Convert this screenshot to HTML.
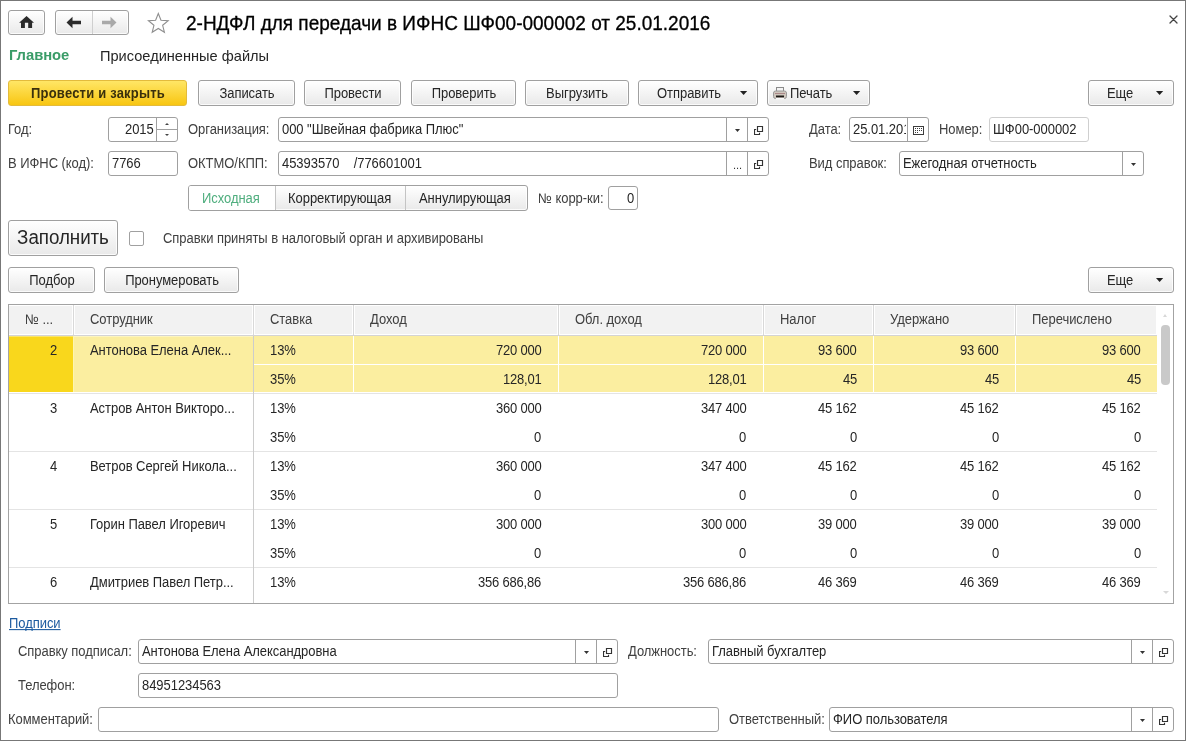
<!DOCTYPE html>
<html><head><meta charset="utf-8"><title>2-НДФЛ</title>
<style>
html,body{margin:0;padding:0;}
body{width:1186px;height:741px;position:relative;overflow:hidden;background:#fff;font-family:"Liberation Sans",sans-serif;}
.frame{position:absolute;left:0;top:0;width:1186px;height:741px;box-sizing:border-box;border:1px solid #777;}
.t{position:absolute;white-space:nowrap;line-height:1;letter-spacing:-0.05px;transform:scaleY(1.07);transform-origin:0 84.65%;will-change:transform;}
.b{position:absolute;box-sizing:border-box;}
</style></head><body>
<div class="frame"></div>
<div class="b" style="left:8px;top:10px;width:37px;height:25px;border:1px solid #a0a0a0;border-radius:3px;background:linear-gradient(#ffffff,#e9e9e9);box-shadow:inset 0 0 0 1px rgba(255,255,255,0.8);"></div>
<svg class="b" style="left:19px;top:15px" width="16" height="14" viewBox="0 0 16 14"><path d="M7.55 0.9L15 7.8H13.1V12.9H9.2V7.8H5.9V12.9H2V7.8H0.1Z" fill="#2b2b2b"/></svg>
<div class="b" style="left:55px;top:10px;width:74px;height:25px;border:1px solid #a0a0a0;border-radius:3px;background:linear-gradient(#ffffff,#e9e9e9);box-shadow:inset 0 0 0 1px rgba(255,255,255,0.8);"></div>
<div class="b" style="left:92px;top:11px;width:1px;height:23px;background:#cfcfcf;"></div>
<svg class="b" style="left:66px;top:16px" width="16" height="13" viewBox="0 0 16 13"><path d="M0.5 6.5L6.5 0.8V4.8H15V8.2H6.5V12.2Z" fill="#2b2b2b"/></svg>
<svg class="b" style="left:101px;top:16px" width="16" height="13" viewBox="0 0 16 13"><path d="M15.5 6.5L9.5 0.8V4.8H1V8.2H9.5V12.2Z" fill="#a9a9a9"/></svg>
<svg class="b" style="left:146px;top:12px" width="26" height="24" viewBox="0 0 26 24"><path d="M12.30 1.50L14.99 8.20L22.19 8.69L16.65 13.31L18.41 20.31L12.30 16.48L6.19 20.31L7.95 13.31L2.41 8.69L9.61 8.20Z" fill="none" stroke="#8f8f8f" stroke-width="1.1" stroke-linejoin="miter"/></svg>
<div class="t" style="left:186px;top:13.92px;font-size:19px;color:#000;font-weight:400;-webkit-text-stroke:0.3px #000;letter-spacing:0;">2-НДФЛ для передачи в ИФНС ШФ00-000002 от 25.01.2016</div>
<svg class="b" style="left:1169px;top:15px" width="9" height="9" viewBox="0 0 9 9"><path d="M1 1L8 8M8 1L1 8" stroke="#444" stroke-width="1.3" stroke-linecap="round"/></svg>
<div class="t" style="left:8.5px;top:48.47px;font-size:14.8px;color:#3a9c68;font-weight:700;transform:none;">Главное</div>
<div class="t" style="left:100px;top:48.64px;font-size:14.6px;color:#262626;font-weight:400;transform:scaleY(1.04);letter-spacing:0;">Присоединенные файлы</div>
<div class="b" style="left:8px;top:80px;width:179px;height:26px;border:1px solid #e3bb3c;border-radius:3px;background:linear-gradient(#ffe666,#f8c612);"></div>
<div class="t" style="left:-102.5px;width:400px;text-align:center;top:86.68px;font-size:13px;color:#3a300c;font-weight:700;letter-spacing:0.2px;">Провести и закрыть</div>
<div class="b" style="left:198px;top:80px;width:97px;height:26px;border:1px solid #a0a0a0;border-radius:3px;background:linear-gradient(#ffffff,#e9e9e9);box-shadow:inset 0 0 0 1px rgba(255,255,255,0.8);"></div>
<div class="t" style="left:46.5px;width:400px;text-align:center;top:86.68px;font-size:13px;color:#262626;font-weight:400;">Записать</div>
<div class="b" style="left:304px;top:80px;width:97px;height:26px;border:1px solid #a0a0a0;border-radius:3px;background:linear-gradient(#ffffff,#e9e9e9);box-shadow:inset 0 0 0 1px rgba(255,255,255,0.8);"></div>
<div class="t" style="left:152.5px;width:400px;text-align:center;top:86.68px;font-size:13px;color:#262626;font-weight:400;">Провести</div>
<div class="b" style="left:411px;top:80px;width:105px;height:26px;border:1px solid #a0a0a0;border-radius:3px;background:linear-gradient(#ffffff,#e9e9e9);box-shadow:inset 0 0 0 1px rgba(255,255,255,0.8);"></div>
<div class="t" style="left:263.5px;width:400px;text-align:center;top:86.68px;font-size:13px;color:#262626;font-weight:400;">Проверить</div>
<div class="b" style="left:525px;top:80px;width:104px;height:26px;border:1px solid #a0a0a0;border-radius:3px;background:linear-gradient(#ffffff,#e9e9e9);box-shadow:inset 0 0 0 1px rgba(255,255,255,0.8);"></div>
<div class="t" style="left:377.0px;width:400px;text-align:center;top:86.68px;font-size:13px;color:#262626;font-weight:400;">Выгрузить</div>
<div class="b" style="left:638px;top:80px;width:120px;height:26px;border:1px solid #a0a0a0;border-radius:3px;background:linear-gradient(#ffffff,#e9e9e9);box-shadow:inset 0 0 0 1px rgba(255,255,255,0.8);"></div>
<div class="t" style="left:657px;top:86.68px;font-size:13px;color:#262626;font-weight:400;">Отправить</div>
<svg class="b" style="left:740px;top:91.0px" width="8" height="5" viewBox="0 0 8 5"><path d="M0 0H7.2L3.6 4Z" fill="#222"/></svg>
<div class="b" style="left:767px;top:80px;width:103px;height:26px;border:1px solid #a0a0a0;border-radius:3px;background:linear-gradient(#ffffff,#e9e9e9);box-shadow:inset 0 0 0 1px rgba(255,255,255,0.8);"></div>
<div class="t" style="left:790px;top:86.68px;font-size:13px;color:#262626;font-weight:400;">Печать</div>
<svg class="b" style="left:853px;top:91.0px" width="8" height="5" viewBox="0 0 8 5"><path d="M0 0H7.2L3.6 4Z" fill="#222"/></svg>
<svg class="b" style="left:773px;top:87px" width="14" height="13" viewBox="0 0 14 13"><rect x="3.5" y="0.5" width="7" height="5" fill="#f4f4f4" stroke="#8a8a8a"/><rect x="0.5" y="4" width="13" height="7.5" rx="2" fill="#cfc6bd" stroke="#9a9a9a"/><rect x="3" y="8.5" width="8" height="2" fill="#1e1a17"/><rect x="3" y="10.8" width="8" height="1.5" fill="#fafafa"/><rect x="2" y="6" width="10" height="1" fill="#a88"/></svg>
<div class="b" style="left:1088px;top:80px;width:86px;height:26px;border:1px solid #a0a0a0;border-radius:3px;background:linear-gradient(#ffffff,#e9e9e9);box-shadow:inset 0 0 0 1px rgba(255,255,255,0.8);"></div>
<div class="t" style="left:1107px;top:86.68px;font-size:13px;color:#262626;font-weight:400;">Еще</div>
<svg class="b" style="left:1156px;top:91.0px" width="8" height="5" viewBox="0 0 8 5"><path d="M0 0H7.2L3.6 4Z" fill="#222"/></svg>
<div class="t" style="left:8px;top:123.00px;font-size:13px;color:#404040;font-weight:400;">Год:</div>
<div class="b" style="left:108px;top:117px;width:70px;height:25px;border:1px solid #a0a0a0;border-radius:3px;background:#fff;"></div>
<div class="b" style="left:156px;top:118px;width:1px;height:23px;background:#a0a0a0;"></div>
<div class="t" style="right:1032px;top:123.10px;font-size:13px;color:#262626;font-weight:400;text-align:right;">2015</div>
<div class="b" style="left:157px;top:129px;width:20px;height:1px;background:#a0a0a0;"></div>
<div class="b" style="left:165px;top:123px;width:0;height:0;border-left:2px solid transparent;border-right:2px solid transparent;border-bottom:2px solid #444;"></div>
<div class="b" style="left:165px;top:134px;width:0;height:0;border-left:2px solid transparent;border-right:2px solid transparent;border-top:2px solid #444;"></div>
<div class="t" style="left:188px;top:123.00px;font-size:13px;color:#404040;font-weight:400;">Организация:</div>
<div class="b" style="left:278px;top:117px;width:491px;height:25px;border:1px solid #a0a0a0;border-radius:3px;background:#fff;"></div>
<svg class="b" style="left:735px;top:129px" width="5" height="3" viewBox="0 0 5 3"><path d="M0 0H5L2.5 3Z" fill="#333"/></svg>
<svg class="b" style="left:754px;top:126px" width="10" height="10" viewBox="0 0 10 10"><path d="M3.5 0.5h5v5h-5z" fill="none" stroke="#333" stroke-width="1.15"/><path d="M2.2 3.5H0.5V8.5H5.5V6.8" fill="none" stroke="#333" stroke-width="1.15"/></svg>
<div class="b" style="left:726px;top:118px;width:1px;height:23px;background:#a0a0a0;"></div>
<div class="b" style="left:747px;top:118px;width:1px;height:23px;background:#a0a0a0;"></div>
<div class="t" style="left:282px;top:123.10px;font-size:13px;color:#262626;font-weight:400;">000 "Швейная фабрика Плюс"</div>
<div class="t" style="left:809px;top:123.00px;font-size:13px;color:#404040;font-weight:400;">Дата:</div>
<div class="b" style="left:849px;top:117px;width:80px;height:25px;border:1px solid #a0a0a0;border-radius:3px;background:#fff;"></div>
<div class="b" style="left:907px;top:118px;width:1px;height:23px;background:#a0a0a0;"></div>
<div class="t" style="left:853px;top:123px;width:53px;overflow:hidden;font-size:13px;color:#262626;">25.01.2016</div>
<svg class="b" style="left:913px;top:126px" width="11" height="9" viewBox="0 0 11 9"><rect x="0.5" y="0.5" width="10" height="8" fill="#fff" stroke="#3d3d3d"/><path d="M2 2h1v1h-1zM4 2h1v1h-1zM6 2h1v1h-1zM8 2h1v1h-1zM2 4h1v1h-1zM4 4h1v1h-1zM6 4h1v1h-1zM8 4h1v1h-1zM2 6h1v1h-1zM4 6h1v1h-1z" fill="#3d3d3d"/></svg>
<div class="t" style="left:939px;top:123.00px;font-size:13px;color:#404040;font-weight:400;">Номер:</div>
<div class="b" style="left:989px;top:117px;width:100px;height:25px;border:1px solid #cfcfcf;border-radius:3px;background:#fff;"></div>
<div class="t" style="left:993px;top:123.10px;font-size:13px;color:#262626;font-weight:400;">ШФ00-000002</div>
<div class="t" style="left:8px;top:157.00px;font-size:13px;color:#404040;font-weight:400;">В ИФНС (код):</div>
<div class="b" style="left:108px;top:151px;width:70px;height:25px;border:1px solid #a0a0a0;border-radius:3px;background:#fff;"></div>
<div class="t" style="left:112px;top:157.10px;font-size:13px;color:#262626;font-weight:400;">7766</div>
<div class="t" style="left:188px;top:157.00px;font-size:13px;color:#404040;font-weight:400;">ОКТМО/КПП:</div>
<div class="b" style="left:278px;top:151px;width:491px;height:25px;border:1px solid #a0a0a0;border-radius:3px;background:#fff;"></div>
<svg class="b" style="left:754px;top:160px" width="10" height="10" viewBox="0 0 10 10"><path d="M3.5 0.5h5v5h-5z" fill="none" stroke="#333" stroke-width="1.15"/><path d="M2.2 3.5H0.5V8.5H5.5V6.8" fill="none" stroke="#333" stroke-width="1.15"/></svg>
<div class="b" style="left:726px;top:152px;width:1px;height:23px;background:#a0a0a0;"></div>
<div class="b" style="left:747px;top:152px;width:1px;height:23px;background:#a0a0a0;"></div>
<div class="t" style="left:282px;top:157.10px;font-size:13px;color:#262626;font-weight:400;">45393570&nbsp;&nbsp;&nbsp; /776601001</div>
<div class="t" style="left:733px;top:160.09px;font-size:11px;color:#333;font-weight:400;">...</div>
<div class="t" style="left:809px;top:157.00px;font-size:13px;color:#404040;font-weight:400;">Вид справок:</div>
<div class="b" style="left:899px;top:151px;width:245px;height:25px;border:1px solid #a0a0a0;border-radius:3px;background:#fff;"></div>
<svg class="b" style="left:1131px;top:163px" width="5" height="3" viewBox="0 0 5 3"><path d="M0 0H5L2.5 3Z" fill="#333"/></svg>
<div class="b" style="left:1122px;top:152px;width:1px;height:23px;background:#a0a0a0;"></div>
<div class="t" style="left:903px;top:157.10px;font-size:13px;color:#262626;font-weight:400;">Ежегодная отчетность</div>
<div class="b" style="left:188px;top:185px;width:340px;height:26px;border:1px solid #a0a0a0;border-radius:3px;background:linear-gradient(#ffffff,#e9e9e9);box-shadow:inset 0 0 0 1px rgba(255,255,255,0.8);"></div>
<div class="b" style="left:189px;top:186px;width:86px;height:24px;background:#fff;border-radius:2px 0 0 2px;"></div>
<div class="b" style="left:275px;top:186px;width:1px;height:24px;background:#c4c4c4;"></div>
<div class="b" style="left:405px;top:186px;width:1px;height:24px;background:#c4c4c4;"></div>
<div class="t" style="left:202px;top:192.00px;font-size:13px;color:#4fae7e;font-weight:400;">Исходная</div>
<div class="t" style="left:288px;top:192.00px;font-size:13px;color:#262626;font-weight:400;">Корректирующая</div>
<div class="t" style="left:419px;top:192.00px;font-size:13px;color:#262626;font-weight:400;">Аннулирующая</div>
<div class="t" style="left:538px;top:192.00px;font-size:13px;color:#404040;font-weight:400;">№ корр-ки:</div>
<div class="b" style="left:608px;top:186px;width:30px;height:24px;border:1px solid #a0a0a0;border-radius:3px;background:#fff;"></div>
<div class="t" style="right:552px;top:191.60px;font-size:13px;color:#262626;font-weight:400;text-align:right;">0</div>
<div class="b" style="left:8px;top:220px;width:110px;height:36px;border:1px solid #a0a0a0;border-radius:3px;background:linear-gradient(#ffffff,#e9e9e9);box-shadow:inset 0 0 0 1px rgba(255,255,255,0.8);"></div>
<div class="t" style="left:-137.0px;width:400px;text-align:center;top:228.85px;font-size:18.8px;color:#262626;font-weight:400;">Заполнить</div>
<div class="b" style="left:129px;top:231px;width:15px;height:15px;border:1px solid #a0a0a0;border-radius:2px;background:#fff;"></div>
<div class="t" style="left:163px;top:232.00px;font-size:13px;color:#404040;font-weight:400;">Справки приняты в налоговый орган и архивированы</div>
<div class="b" style="left:8px;top:267px;width:87px;height:26px;border:1px solid #a0a0a0;border-radius:3px;background:linear-gradient(#ffffff,#e9e9e9);box-shadow:inset 0 0 0 1px rgba(255,255,255,0.8);"></div>
<div class="t" style="left:-148.5px;width:400px;text-align:center;top:273.68px;font-size:13px;color:#262626;font-weight:400;">Подбор</div>
<div class="b" style="left:104px;top:267px;width:135px;height:26px;border:1px solid #a0a0a0;border-radius:3px;background:linear-gradient(#ffffff,#e9e9e9);box-shadow:inset 0 0 0 1px rgba(255,255,255,0.8);"></div>
<div class="t" style="left:-28.5px;width:400px;text-align:center;top:273.68px;font-size:13px;color:#262626;font-weight:400;">Пронумеровать</div>
<div class="b" style="left:1088px;top:267px;width:86px;height:26px;border:1px solid #a0a0a0;border-radius:3px;background:linear-gradient(#ffffff,#e9e9e9);box-shadow:inset 0 0 0 1px rgba(255,255,255,0.8);"></div>
<div class="t" style="left:1107px;top:273.68px;font-size:13px;color:#262626;font-weight:400;">Еще</div>
<svg class="b" style="left:1156px;top:278.0px" width="8" height="5" viewBox="0 0 8 5"><path d="M0 0H7.2L3.6 4Z" fill="#222"/></svg>
<div class="b" style="left:8px;top:304px;width:1166px;height:300px;border:1px solid #a3a3a3;background:#fff;"></div>
<div class="b" style="left:9px;top:306px;width:1147px;height:28px;background:#f2f2f2;"></div>
<div class="b" style="left:9px;top:334px;width:1148px;height:1px;background:#fff;"></div>
<div class="b" style="left:9px;top:335px;width:1148px;height:1px;background:#d4d4d4;"></div>
<div class="b" style="left:73px;top:305px;width:1px;height:30px;background:#d9d9d9;"></div>
<div class="b" style="left:72px;top:305px;width:1px;height:29px;background:#fff;"></div>
<div class="b" style="left:74px;top:305px;width:1px;height:29px;background:#fff;"></div>
<div class="b" style="left:253px;top:305px;width:1px;height:30px;background:#d9d9d9;"></div>
<div class="b" style="left:252px;top:305px;width:1px;height:29px;background:#fff;"></div>
<div class="b" style="left:254px;top:305px;width:1px;height:29px;background:#fff;"></div>
<div class="b" style="left:353px;top:305px;width:1px;height:30px;background:#d9d9d9;"></div>
<div class="b" style="left:352px;top:305px;width:1px;height:29px;background:#fff;"></div>
<div class="b" style="left:354px;top:305px;width:1px;height:29px;background:#fff;"></div>
<div class="b" style="left:558px;top:305px;width:1px;height:30px;background:#d9d9d9;"></div>
<div class="b" style="left:557px;top:305px;width:1px;height:29px;background:#fff;"></div>
<div class="b" style="left:559px;top:305px;width:1px;height:29px;background:#fff;"></div>
<div class="b" style="left:763px;top:305px;width:1px;height:30px;background:#d9d9d9;"></div>
<div class="b" style="left:762px;top:305px;width:1px;height:29px;background:#fff;"></div>
<div class="b" style="left:764px;top:305px;width:1px;height:29px;background:#fff;"></div>
<div class="b" style="left:873px;top:305px;width:1px;height:30px;background:#d9d9d9;"></div>
<div class="b" style="left:872px;top:305px;width:1px;height:29px;background:#fff;"></div>
<div class="b" style="left:874px;top:305px;width:1px;height:29px;background:#fff;"></div>
<div class="b" style="left:1015px;top:305px;width:1px;height:30px;background:#d9d9d9;"></div>
<div class="b" style="left:1014px;top:305px;width:1px;height:29px;background:#fff;"></div>
<div class="b" style="left:1016px;top:305px;width:1px;height:29px;background:#fff;"></div>
<div class="t" style="left:25px;top:313.00px;font-size:13px;color:#404040;font-weight:400;">№ ...</div>
<div class="t" style="left:90px;top:313.00px;font-size:13px;color:#404040;font-weight:400;">Сотрудник</div>
<div class="t" style="left:270px;top:313.00px;font-size:13px;color:#404040;font-weight:400;">Ставка</div>
<div class="t" style="left:370px;top:313.00px;font-size:13px;color:#404040;font-weight:400;">Доход</div>
<div class="t" style="left:575px;top:313.00px;font-size:13px;color:#404040;font-weight:400;">Обл. доход</div>
<div class="t" style="left:780px;top:313.00px;font-size:13px;color:#404040;font-weight:400;">Налог</div>
<div class="t" style="left:890px;top:313.00px;font-size:13px;color:#404040;font-weight:400;">Удержано</div>
<div class="t" style="left:1032px;top:313.00px;font-size:13px;color:#404040;font-weight:400;">Перечислено</div>
<div class="b" style="left:9px;top:336px;width:64px;height:56px;background:#f9d71c;"></div>
<div class="b" style="left:73px;top:336px;width:180px;height:56px;background:#fbeea0;"></div>
<div class="b" style="left:9px;top:336px;width:64px;height:1px;background:#fbe56a;"></div>
<div class="b" style="left:73px;top:336px;width:180px;height:1px;background:#fdf5c0;"></div>
<div class="b" style="left:73px;top:336px;width:1px;height:56px;background:#fdf5b0;"></div>
<div class="b" style="left:254px;top:336px;width:99px;height:28px;background:#fbeea0;"></div>
<div class="b" style="left:254px;top:365px;width:99px;height:27px;background:#fbeea0;"></div>
<div class="b" style="left:354px;top:336px;width:204px;height:28px;background:#fbeea0;"></div>
<div class="b" style="left:354px;top:365px;width:204px;height:27px;background:#fbeea0;"></div>
<div class="b" style="left:559px;top:336px;width:204px;height:28px;background:#fbeea0;"></div>
<div class="b" style="left:559px;top:365px;width:204px;height:27px;background:#fbeea0;"></div>
<div class="b" style="left:764px;top:336px;width:109px;height:28px;background:#fbeea0;"></div>
<div class="b" style="left:764px;top:365px;width:109px;height:27px;background:#fbeea0;"></div>
<div class="b" style="left:874px;top:336px;width:141px;height:28px;background:#fbeea0;"></div>
<div class="b" style="left:874px;top:365px;width:141px;height:27px;background:#fbeea0;"></div>
<div class="b" style="left:1016px;top:336px;width:141px;height:28px;background:#fbeea0;"></div>
<div class="b" style="left:1016px;top:365px;width:141px;height:27px;background:#fbeea0;"></div>
<div class="b" style="left:9px;top:392px;width:1148px;height:1px;background:#fff;"></div>
<div class="b" style="left:9px;top:393px;width:1148px;height:1px;background:#e4e4e4;"></div>
<div class="b" style="left:253px;top:336px;width:1px;height:58px;background:#cccccc;"></div>
<div class="t" style="right:1129px;top:344.00px;font-size:13px;color:#262626;font-weight:400;text-align:right;">2</div>
<div class="t" style="left:90px;top:344.00px;font-size:13px;color:#262626;font-weight:400;">Антонова Елена Алек...</div>
<div class="t" style="left:270px;top:344.00px;font-size:13px;color:#262626;font-weight:400;">13%</div>
<div class="t" style="right:644.6px;top:344.00px;font-size:13px;color:#262626;font-weight:400;text-align:right;letter-spacing:-0.2px;">720 000</div>
<div class="t" style="right:439.5px;top:344.00px;font-size:13px;color:#262626;font-weight:400;text-align:right;letter-spacing:-0.2px;">720 000</div>
<div class="t" style="right:329.20000000000005px;top:344.00px;font-size:13px;color:#262626;font-weight:400;text-align:right;letter-spacing:-0.2px;">93 600</div>
<div class="t" style="right:187.10000000000002px;top:344.00px;font-size:13px;color:#262626;font-weight:400;text-align:right;letter-spacing:-0.2px;">93 600</div>
<div class="t" style="right:45.200000000000045px;top:344.00px;font-size:13px;color:#262626;font-weight:400;text-align:right;letter-spacing:-0.2px;">93 600</div>
<div class="t" style="left:270px;top:373.00px;font-size:13px;color:#262626;font-weight:400;">35%</div>
<div class="t" style="right:644.6px;top:373.00px;font-size:13px;color:#262626;font-weight:400;text-align:right;letter-spacing:-0.2px;">128,01</div>
<div class="t" style="right:439.5px;top:373.00px;font-size:13px;color:#262626;font-weight:400;text-align:right;letter-spacing:-0.2px;">128,01</div>
<div class="t" style="right:329.20000000000005px;top:373.00px;font-size:13px;color:#262626;font-weight:400;text-align:right;letter-spacing:-0.2px;">45</div>
<div class="t" style="right:187.10000000000002px;top:373.00px;font-size:13px;color:#262626;font-weight:400;text-align:right;letter-spacing:-0.2px;">45</div>
<div class="t" style="right:45.200000000000045px;top:373.00px;font-size:13px;color:#262626;font-weight:400;text-align:right;letter-spacing:-0.2px;">45</div>
<div class="b" style="left:9px;top:451px;width:1148px;height:1px;background:#e4e4e4;"></div>
<div class="b" style="left:253px;top:394px;width:1px;height:58px;background:#cccccc;"></div>
<div class="t" style="right:1129px;top:402.00px;font-size:13px;color:#262626;font-weight:400;text-align:right;">3</div>
<div class="t" style="left:90px;top:402.00px;font-size:13px;color:#262626;font-weight:400;">Астров Антон Викторо...</div>
<div class="t" style="left:270px;top:402.00px;font-size:13px;color:#262626;font-weight:400;">13%</div>
<div class="t" style="right:644.6px;top:402.00px;font-size:13px;color:#262626;font-weight:400;text-align:right;letter-spacing:-0.2px;">360 000</div>
<div class="t" style="right:439.5px;top:402.00px;font-size:13px;color:#262626;font-weight:400;text-align:right;letter-spacing:-0.2px;">347 400</div>
<div class="t" style="right:329.20000000000005px;top:402.00px;font-size:13px;color:#262626;font-weight:400;text-align:right;letter-spacing:-0.2px;">45 162</div>
<div class="t" style="right:187.10000000000002px;top:402.00px;font-size:13px;color:#262626;font-weight:400;text-align:right;letter-spacing:-0.2px;">45 162</div>
<div class="t" style="right:45.200000000000045px;top:402.00px;font-size:13px;color:#262626;font-weight:400;text-align:right;letter-spacing:-0.2px;">45 162</div>
<div class="t" style="left:270px;top:431.00px;font-size:13px;color:#262626;font-weight:400;">35%</div>
<div class="t" style="right:644.6px;top:431.00px;font-size:13px;color:#262626;font-weight:400;text-align:right;letter-spacing:-0.2px;">0</div>
<div class="t" style="right:439.5px;top:431.00px;font-size:13px;color:#262626;font-weight:400;text-align:right;letter-spacing:-0.2px;">0</div>
<div class="t" style="right:329.20000000000005px;top:431.00px;font-size:13px;color:#262626;font-weight:400;text-align:right;letter-spacing:-0.2px;">0</div>
<div class="t" style="right:187.10000000000002px;top:431.00px;font-size:13px;color:#262626;font-weight:400;text-align:right;letter-spacing:-0.2px;">0</div>
<div class="t" style="right:45.200000000000045px;top:431.00px;font-size:13px;color:#262626;font-weight:400;text-align:right;letter-spacing:-0.2px;">0</div>
<div class="b" style="left:9px;top:509px;width:1148px;height:1px;background:#e4e4e4;"></div>
<div class="b" style="left:253px;top:452px;width:1px;height:58px;background:#cccccc;"></div>
<div class="t" style="right:1129px;top:460.00px;font-size:13px;color:#262626;font-weight:400;text-align:right;">4</div>
<div class="t" style="left:90px;top:460.00px;font-size:13px;color:#262626;font-weight:400;">Ветров Сергей Никола...</div>
<div class="t" style="left:270px;top:460.00px;font-size:13px;color:#262626;font-weight:400;">13%</div>
<div class="t" style="right:644.6px;top:460.00px;font-size:13px;color:#262626;font-weight:400;text-align:right;letter-spacing:-0.2px;">360 000</div>
<div class="t" style="right:439.5px;top:460.00px;font-size:13px;color:#262626;font-weight:400;text-align:right;letter-spacing:-0.2px;">347 400</div>
<div class="t" style="right:329.20000000000005px;top:460.00px;font-size:13px;color:#262626;font-weight:400;text-align:right;letter-spacing:-0.2px;">45 162</div>
<div class="t" style="right:187.10000000000002px;top:460.00px;font-size:13px;color:#262626;font-weight:400;text-align:right;letter-spacing:-0.2px;">45 162</div>
<div class="t" style="right:45.200000000000045px;top:460.00px;font-size:13px;color:#262626;font-weight:400;text-align:right;letter-spacing:-0.2px;">45 162</div>
<div class="t" style="left:270px;top:489.00px;font-size:13px;color:#262626;font-weight:400;">35%</div>
<div class="t" style="right:644.6px;top:489.00px;font-size:13px;color:#262626;font-weight:400;text-align:right;letter-spacing:-0.2px;">0</div>
<div class="t" style="right:439.5px;top:489.00px;font-size:13px;color:#262626;font-weight:400;text-align:right;letter-spacing:-0.2px;">0</div>
<div class="t" style="right:329.20000000000005px;top:489.00px;font-size:13px;color:#262626;font-weight:400;text-align:right;letter-spacing:-0.2px;">0</div>
<div class="t" style="right:187.10000000000002px;top:489.00px;font-size:13px;color:#262626;font-weight:400;text-align:right;letter-spacing:-0.2px;">0</div>
<div class="t" style="right:45.200000000000045px;top:489.00px;font-size:13px;color:#262626;font-weight:400;text-align:right;letter-spacing:-0.2px;">0</div>
<div class="b" style="left:9px;top:567px;width:1148px;height:1px;background:#e4e4e4;"></div>
<div class="b" style="left:253px;top:510px;width:1px;height:58px;background:#cccccc;"></div>
<div class="t" style="right:1129px;top:518.00px;font-size:13px;color:#262626;font-weight:400;text-align:right;">5</div>
<div class="t" style="left:90px;top:518.00px;font-size:13px;color:#262626;font-weight:400;">Горин Павел Игоревич</div>
<div class="t" style="left:270px;top:518.00px;font-size:13px;color:#262626;font-weight:400;">13%</div>
<div class="t" style="right:644.6px;top:518.00px;font-size:13px;color:#262626;font-weight:400;text-align:right;letter-spacing:-0.2px;">300 000</div>
<div class="t" style="right:439.5px;top:518.00px;font-size:13px;color:#262626;font-weight:400;text-align:right;letter-spacing:-0.2px;">300 000</div>
<div class="t" style="right:329.20000000000005px;top:518.00px;font-size:13px;color:#262626;font-weight:400;text-align:right;letter-spacing:-0.2px;">39 000</div>
<div class="t" style="right:187.10000000000002px;top:518.00px;font-size:13px;color:#262626;font-weight:400;text-align:right;letter-spacing:-0.2px;">39 000</div>
<div class="t" style="right:45.200000000000045px;top:518.00px;font-size:13px;color:#262626;font-weight:400;text-align:right;letter-spacing:-0.2px;">39 000</div>
<div class="t" style="left:270px;top:547.00px;font-size:13px;color:#262626;font-weight:400;">35%</div>
<div class="t" style="right:644.6px;top:547.00px;font-size:13px;color:#262626;font-weight:400;text-align:right;letter-spacing:-0.2px;">0</div>
<div class="t" style="right:439.5px;top:547.00px;font-size:13px;color:#262626;font-weight:400;text-align:right;letter-spacing:-0.2px;">0</div>
<div class="t" style="right:329.20000000000005px;top:547.00px;font-size:13px;color:#262626;font-weight:400;text-align:right;letter-spacing:-0.2px;">0</div>
<div class="t" style="right:187.10000000000002px;top:547.00px;font-size:13px;color:#262626;font-weight:400;text-align:right;letter-spacing:-0.2px;">0</div>
<div class="t" style="right:45.200000000000045px;top:547.00px;font-size:13px;color:#262626;font-weight:400;text-align:right;letter-spacing:-0.2px;">0</div>
<div class="b" style="left:253px;top:568px;width:1px;height:35px;background:#cccccc;"></div>
<div class="t" style="right:1129px;top:576.00px;font-size:13px;color:#262626;font-weight:400;text-align:right;">6</div>
<div class="t" style="left:90px;top:576.00px;font-size:13px;color:#262626;font-weight:400;">Дмитриев Павел Петр...</div>
<div class="t" style="left:270px;top:576.00px;font-size:13px;color:#262626;font-weight:400;">13%</div>
<div class="t" style="right:644.6px;top:576.00px;font-size:13px;color:#262626;font-weight:400;text-align:right;letter-spacing:-0.2px;">356 686,86</div>
<div class="t" style="right:439.5px;top:576.00px;font-size:13px;color:#262626;font-weight:400;text-align:right;letter-spacing:-0.2px;">356 686,86</div>
<div class="t" style="right:329.20000000000005px;top:576.00px;font-size:13px;color:#262626;font-weight:400;text-align:right;letter-spacing:-0.2px;">46 369</div>
<div class="t" style="right:187.10000000000002px;top:576.00px;font-size:13px;color:#262626;font-weight:400;text-align:right;letter-spacing:-0.2px;">46 369</div>
<div class="t" style="right:45.200000000000045px;top:576.00px;font-size:13px;color:#262626;font-weight:400;text-align:right;letter-spacing:-0.2px;">46 369</div>
<div class="b" style="left:1161px;top:325px;width:9px;height:60px;background:#c9c9c9;border-radius:4px;"></div>
<div class="b" style="left:1163px;top:314px;width:0;height:0;border-left:2.5px solid transparent;border-right:2.5px solid transparent;border-bottom:3px solid #d8d8d8;"></div>
<div class="b" style="left:1163px;top:591px;width:0;height:0;border-left:3px solid transparent;border-right:3px solid transparent;border-top:3px solid #d8d8d8;"></div>
<div class="t" style="left:9px;top:617.00px;font-size:13px;color:#1c5a9f;font-weight:400;text-decoration:underline;text-decoration-skip-ink:none;">Подписи</div>
<div class="t" style="left:18px;top:645.00px;font-size:13px;color:#404040;font-weight:400;">Справку подписал:</div>
<div class="b" style="left:138px;top:639px;width:480px;height:25px;border:1px solid #a0a0a0;border-radius:3px;background:#fff;"></div>
<svg class="b" style="left:584px;top:651px" width="5" height="3" viewBox="0 0 5 3"><path d="M0 0H5L2.5 3Z" fill="#333"/></svg>
<svg class="b" style="left:603px;top:648px" width="10" height="10" viewBox="0 0 10 10"><path d="M3.5 0.5h5v5h-5z" fill="none" stroke="#333" stroke-width="1.15"/><path d="M2.2 3.5H0.5V8.5H5.5V6.8" fill="none" stroke="#333" stroke-width="1.15"/></svg>
<div class="b" style="left:575px;top:640px;width:1px;height:23px;background:#a0a0a0;"></div>
<div class="b" style="left:596px;top:640px;width:1px;height:23px;background:#a0a0a0;"></div>
<div class="t" style="left:142px;top:645.10px;font-size:13px;color:#262626;font-weight:400;">Антонова Елена Александровна</div>
<div class="t" style="left:628px;top:645.00px;font-size:13px;color:#404040;font-weight:400;">Должность:</div>
<div class="b" style="left:708px;top:639px;width:466px;height:25px;border:1px solid #a0a0a0;border-radius:3px;background:#fff;"></div>
<svg class="b" style="left:1140px;top:651px" width="5" height="3" viewBox="0 0 5 3"><path d="M0 0H5L2.5 3Z" fill="#333"/></svg>
<svg class="b" style="left:1159px;top:648px" width="10" height="10" viewBox="0 0 10 10"><path d="M3.5 0.5h5v5h-5z" fill="none" stroke="#333" stroke-width="1.15"/><path d="M2.2 3.5H0.5V8.5H5.5V6.8" fill="none" stroke="#333" stroke-width="1.15"/></svg>
<div class="b" style="left:1131px;top:640px;width:1px;height:23px;background:#a0a0a0;"></div>
<div class="b" style="left:1152px;top:640px;width:1px;height:23px;background:#a0a0a0;"></div>
<div class="t" style="left:712px;top:645.10px;font-size:13px;color:#262626;font-weight:400;">Главный бухгалтер</div>
<div class="t" style="left:18px;top:679.00px;font-size:13px;color:#404040;font-weight:400;">Телефон:</div>
<div class="b" style="left:138px;top:673px;width:480px;height:25px;border:1px solid #a0a0a0;border-radius:3px;background:#fff;"></div>
<div class="t" style="left:142px;top:679.10px;font-size:13px;color:#262626;font-weight:400;">84951234563</div>
<div class="t" style="left:8px;top:713.00px;font-size:13px;color:#404040;font-weight:400;">Комментарий:</div>
<div class="b" style="left:98px;top:707px;width:621px;height:25px;border:1px solid #a0a0a0;border-radius:3px;background:#fff;"></div>
<div class="t" style="left:729px;top:713.00px;font-size:13px;color:#404040;font-weight:400;">Ответственный:</div>
<div class="b" style="left:829px;top:707px;width:345px;height:25px;border:1px solid #a0a0a0;border-radius:3px;background:#fff;"></div>
<svg class="b" style="left:1140px;top:719px" width="5" height="3" viewBox="0 0 5 3"><path d="M0 0H5L2.5 3Z" fill="#333"/></svg>
<svg class="b" style="left:1159px;top:716px" width="10" height="10" viewBox="0 0 10 10"><path d="M3.5 0.5h5v5h-5z" fill="none" stroke="#333" stroke-width="1.15"/><path d="M2.2 3.5H0.5V8.5H5.5V6.8" fill="none" stroke="#333" stroke-width="1.15"/></svg>
<div class="b" style="left:1131px;top:708px;width:1px;height:23px;background:#a0a0a0;"></div>
<div class="b" style="left:1152px;top:708px;width:1px;height:23px;background:#a0a0a0;"></div>
<div class="t" style="left:833px;top:713.10px;font-size:13px;color:#262626;font-weight:400;">ФИО пользователя</div>
</body></html>
